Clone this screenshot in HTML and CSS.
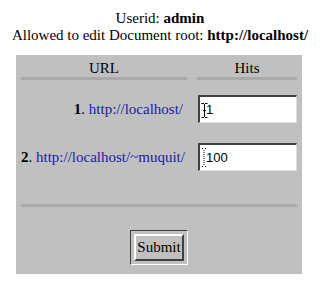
FILE: index.html
```html
<!DOCTYPE html>
<html>
<head>
<meta charset="utf-8">
<link rel="stylesheet" href="styles.css">
</head>
<body>
<div class="intro">
  <div>Userid: <b>admin</b></div>
  <div>Allowed to edit Document root: <b>http://localhost/</b></div>
</div>
<form class="panel">
  <div class="grid">
    <div class="head">URL</div>
    <div class="head">Hits</div>
    <div class="url first"><b>1</b>. <a href="#">http://localhost/</a></div>
    <div class="hit first">
      <input class="field" type="text" value="1">
      <svg class="ibeam" width="7" height="15" viewBox="0 0 7 15"><path d="M0.5 0.5h2.5M4 0.5h2.5M3.5 1v13M0.5 14.5h2.5M4 14.5h2.5M2 7.5h3" stroke="#000" stroke-width="1" fill="none"/></svg>
    </div>
    <div class="url second"><b>2</b>. <a href="#">http://localhost/~muquit/</a></div>
    <div class="hit second">
      <input class="field" type="text" value="100">
      <svg class="caret" width="5" height="19" viewBox="0 0 5 19"><path d="M0 0.5h1M3 0.5h1M2 2v15M0 18.5h1M3 18.5h1" stroke="#000" stroke-width="1" stroke-dasharray="1 1" fill="none"/></svg>
    </div>
    <div class="rule"></div>
  </div>
  <div class="actions">
    <div class="frame"><button class="submit" type="button">Submit</button></div>
  </div>
</form>
</body>
</html>
```
FILE: styles.css
```css
html, body {
  background: #ffffff;
}
body {
  margin: 8px;
  font-family: "Liberation Serif", "Times New Roman", serif;
  font-size: 15px;
  color: #000;
}
.intro {
  text-align: center;
  line-height: 17px;
  margin-top: 2px;
}
.panel {
  margin: 11px 0 0 8px;
  width: 286px;
  background: #c0c0c0;
  padding: 0 5px 9px;
  box-sizing: border-box;
}
.grid {
  display: grid;
  grid-template-columns: 166px 100px;
  column-gap: 10px;
  align-items: center;
}
.head {
  text-align: center;
  padding-top: 4px;
  line-height: 18px;
  border-bottom: 3px solid #a9a9a9;
  align-self: stretch;
}
.url {
  text-align: right;
  padding-right: 4px;
  white-space: nowrap;
}
.url a {
  color: #1a1aa6;
  text-decoration: none;
}
.hit {
  position: relative;
  height: 28px;
}
.first {
  margin-top: 15px;
}
.second {
  margin-top: 20px;
}
.field {
  display: block;
  box-sizing: border-box;
  width: 99px;
  height: 28px;
  margin: 0 0 0 1px;
  padding: 0 0 0 6px;
  border-top: 2px solid #404040;
  border-left: 2px solid #404040;
  border-right: 1px solid #dedede;
  border-bottom: 1px solid #dedede;
  background: #ffffff;
  font-family: "Liberation Sans", Arial, sans-serif;
  font-size: 13px;
  color: #000;
  outline: none;
}
.ibeam {
  position: absolute;
  left: 4px;
  top: 8px;
}
.caret {
  position: absolute;
  left: 5px;
  top: 5px;
}
.rule {
  grid-column: 1 / 3;
  margin-top: 33px;
  height: 3px;
  background: #a9a9a9;
}
.actions {
  display: flex;
  justify-content: center;
  margin-top: 23px;
}
.frame {
  border-top: 1px solid #404040;
  border-left: 1px solid #404040;
  border-right: 1px solid #ffffff;
  border-bottom: 1px solid #ffffff;
  padding: 3px;
}
.submit {
  display: block;
  box-sizing: border-box;
  width: 50px;
  height: 27px;
  padding: 0;
  margin: 0;
  background: #c0c0c0;
  border-top: 2px solid #ffffff;
  border-left: 2px solid #ffffff;
  border-right: 2px solid #404040;
  border-bottom: 2px solid #404040;
  font-family: "Liberation Serif", "Times New Roman", serif;
  font-size: 15px;
  color: #000;
}
```
